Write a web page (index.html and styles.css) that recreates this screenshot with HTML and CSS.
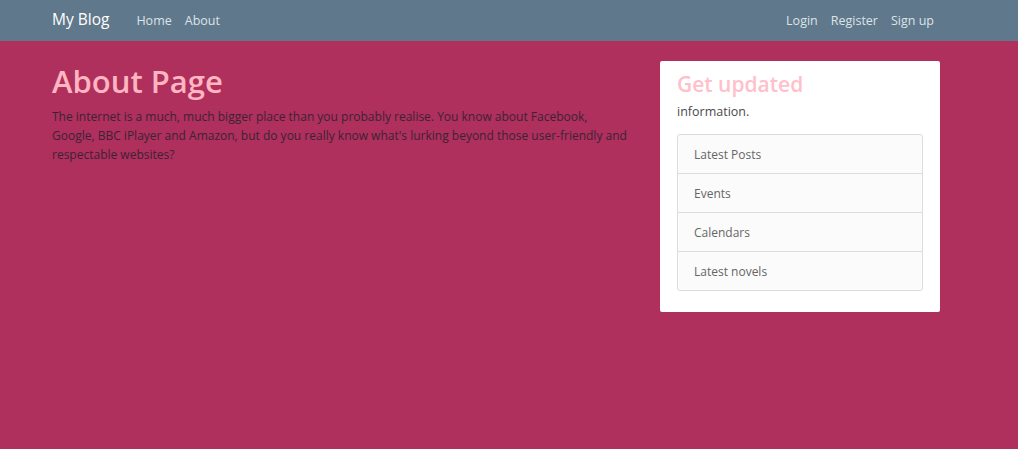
FILE: index.html
```html
<!DOCTYPE html>
<html lang="en">
<head>
<meta charset="utf-8">
<title>About Page</title>
<link rel="stylesheet" href="styles.css">
</head>
<body>
<nav class="navbar">
  <div class="nav-inner">
    <a class="brand" href="#">My Blog</a>
    <ul class="nav-links">
      <li><a href="#">Home</a></li>
      <li><a href="#">About</a></li>
    </ul>
    <ul class="nav-links nav-right">
      <li><a href="#">Login</a></li>
      <li><a href="#">Register</a></li>
      <li><a href="#">Sign up</a></li>
    </ul>
  </div>
</nav>
<main class="content">
  <section class="main-col">
    <h1 class="title">About Page</h1>
    <p class="lead-text">The internet is a much, much bigger place than you probably realise. You know about Facebook, Google,&nbsp;BBC iPlayer and Amazon, but do you really know what's lurking beyond those user-friendly and respectable websites?</p>
  </section>
  <aside class="sidebar">
    <h3 class="side-title">Get updated</h3>
    <p class="side-text">information.</p>
    <ul class="list-group">
      <li class="list-item">Latest Posts</li>
      <li class="list-item">Events</li>
      <li class="list-item">Calendars</li>
      <li class="list-item">Latest novels</li>
    </ul>
  </aside>
</main>
</body>
</html>
```
FILE: styles.css
```css
* { box-sizing: border-box; }
html, body { margin: 0; padding: 0; }
body {
  background: #af2f5d;
  font-family: "Open Sans", "Noto Sans", sans-serif;
  color: #3b2733;
  height: 449px;
}
.navbar {
  background: #5f788b;
  height: 41px;
}
.nav-inner {
  display: flex;
  align-items: center;
  height: 100%;
  padding: 0 84px 3px 52px;
}
.brand {
  color: #ffffff;
  text-decoration: none;
  font-size: 15.5px;
  margin-right: 27px;
  margin-top: 0;
}
.nav-links {
  display: flex;
  list-style: none;
  margin: 0;
  padding: 0;
  gap: 13px;
}
.nav-links a {
  color: #dde3e8;
  text-decoration: none;
  font-size: 12.5px;
}
.nav-right { margin-left: auto; }
.content {
  display: flex;
  align-items: flex-start;
  padding: 20px 0 0 52px;
}
.main-col {
  width: 584px;
  margin-right: 24px;
}
.title {
  margin: 0 0 6px;
  color: #ffb6c1;
  font-size: 31px;
  font-weight: 600;
  line-height: 40px;
}
.lead-text {
  margin: 0;
  font-size: 12px;
  line-height: 19px;
  color: #3a2434;
}
.sidebar {
  width: 280px;
  background: #ffffff;
  border-radius: 2px;
  padding: 8px 17px 21px;
}
.side-title {
  margin: 0;
  color: #ffc0cb;
  font-size: 21px;
  font-weight: 600;
  line-height: 30px;
}
.side-text {
  margin: 3px 0 12px;
  font-size: 12.5px;
  line-height: 20px;
  color: #4a4a4a;
}
.list-group {
  list-style: none;
  margin: 0;
  padding: 0;
  border: 1px solid #dcdcdc;
  border-radius: 3px;
  background: #fbfbfb;
}
.list-item {
  height: 39px;
  display: flex;
  align-items: center;
  padding: 0 16px;
  font-size: 12px;
  color: #666;
  border-top: 1px solid #dcdcdc;
}
.list-item:first-child { border-top: none; height: 38px; }
```
